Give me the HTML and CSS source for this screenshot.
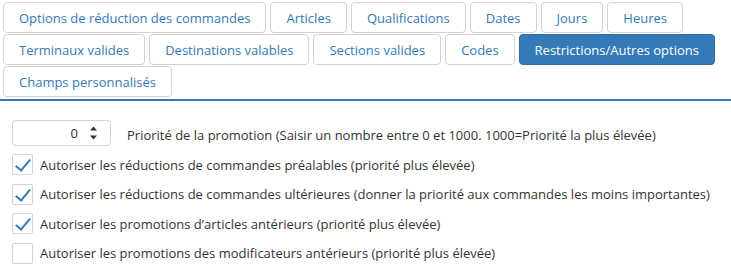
FILE: index.html
```html
<!DOCTYPE html>
<html lang="fr">
<head>
  <meta charset="UTF-8" />
  <title>Restrictions</title>
  <link rel="stylesheet" href="styles.css">
</head>
<body>
  <div class="tabs">
    <a class="tab">Options de réduction des commandes</a>
    <a class="tab">Articles</a>
    <a class="tab">Qualifications</a>
    <a class="tab">Dates</a>
    <a class="tab">Jours</a>
    <a class="tab">Heures</a>
    <a class="tab">Terminaux valides</a>
    <a class="tab">Destinations valables</a>
    <a class="tab">Sections valides</a>
    <a class="tab">Codes</a>
    <a class="tab active">Restrictions/Autres options</a>
    <a class="tab">Champs personnalisés</a>
  </div>

  <div class="panel">
    <div class="row">
      <div class="number">
        <span class="value">0</span>
        <span class="spin">
          <svg width="9" height="16" viewBox="0 0 9 16">
            <path d="M4.5 1.5 L8 5.5 L1 5.5 Z" fill="#333"/>
            <path d="M1 10.5 L8 10.5 L4.5 14.5 Z" fill="#333"/>
          </svg>
        </span>
      </div>
      <span class="label">Priorité de la promotion (Saisir un nombre entre 0 et 1000. 1000=Priorité la plus élevée)</span>
    </div>

    <label class="row check">
      <span class="box on"></span>
      <span>Autoriser les réductions de commandes préalables (priorité plus élevée)</span>
    </label>
    <label class="row check">
      <span class="box on"></span>
      <span>Autoriser les réductions de commandes ultérieures (donner la priorité aux commandes les moins importantes)</span>
    </label>
    <label class="row check">
      <span class="box on"></span>
      <span>Autoriser les promotions d’articles antérieurs (priorité plus élevée)</span>
    </label>
    <label class="row check">
      <span class="box"></span>
      <span>Autoriser les promotions des modificateurs antérieurs (priorité plus élevée)</span>
    </label>
  </div>
</body>
</html>
```

FILE: styles.css
```css
body {
  font-family: "Open Sans", Arial, sans-serif;
  font-size: 13px;
  color: #333;
  background: #fff;
  margin: 0;
}

.tabs {
  display: flex;
  flex-wrap: wrap;
  gap: 1px 4px;
  padding: 2px 0 2px 3px;
  border-bottom: 2px solid #337ab7;
}

.tab {
  display: flex;
  align-items: center;
  height: 29px;
  padding: 0 15px;
  border: 1px solid #d4d4d4;
  border-radius: 4px;
  color: #337ab7;
  background: #fff;
  cursor: pointer;
}

.tab.active {
  background: #337ab7;
  border-color: #2e6da4;
  color: #fff;
}

.panel {
  padding: 19px 12px 0;
}

.row {
  display: flex;
  align-items: center;
}

.number {
  display: flex;
  align-items: center;
  justify-content: flex-end;
  box-sizing: border-box;
  width: 99px;
  height: 26px;
  border: 1px solid #d4d4d4;
  border-radius: 4px;
  padding-right: 12px;
  margin-right: 16px;
  margin-bottom: 4px;
}

.number .value {
  margin-right: 11px;
}

.spin svg {
  display: block;
}

.check {
  height: 29.5px;
}

.box {
  box-sizing: border-box;
  width: 21px;
  height: 21px;
  border: 1px solid #d4d4d4;
  border-radius: 2px;
  margin-right: 7px;
  position: relative;
}

.box.on::after {
  content: "";
  position: absolute;
  left: 6px;
  top: 1px;
  width: 6px;
  height: 13px;
  border: solid #337ab7;
  border-width: 0 2.5px 2.5px 0;
  transform: rotate(40deg);
}
```
